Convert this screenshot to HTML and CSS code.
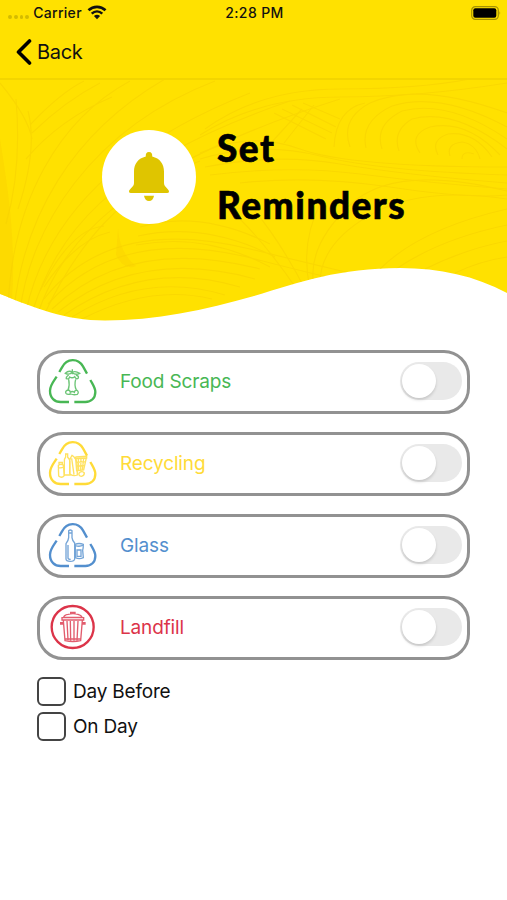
FILE: index.html
```html
<!DOCTYPE html>
<html lang="en">
<head>
    <meta charset="UTF-8">
    <meta name="viewport" content="width=device-width, initial-scale=1.0">
    <title>Set Reminders</title>
    <link rel="stylesheet" href="styles.css">
</head>
<body>
    <!-- Status Bar -->
    <div class="status-bar">
        <div class="carrier">
            <span class="dots"><i></i><i></i><i></i><i></i></span>
            <span>Carrier</span>
            <svg class="wifi" viewBox="0 0 20 15">
                <path d="M1.5 5.3C6.3.7 13.7.7 18.5 5.3" stroke-width="2.7"/>
                <path d="M4.7 8.7C7.8 5.8 12.2 5.8 15.3 8.7" stroke-width="2.5"/>
                <path d="M6.9 11.1Q10 8.3 13.1 11.1L10 14.2Z" fill="#111" stroke="none"/>
            </svg>
        </div>
        <span class="time">2:28 PM</span>
        <svg class="battery" viewBox="0 0 30 14">
            <rect x="0.7" y="0.7" width="26.6" height="12.6" rx="3.6" fill="none" stroke="#a69300" stroke-width="1.2"/>
            <rect x="2.3" y="2.3" width="23" height="9.4" rx="2" fill="#000"/>
            <path d="M28.5 5Q30 7 28.5 9Z" fill="#a69300"/>
        </svg>
    </div>

    <!-- Navigation Bar -->
    <div class="navbar">
        <a href="#">
            <svg class="chevron" viewBox="0 0 16 26"><path d="M13.5 2L2.5 13L13.5 24"/></svg>
            <span>Back</span>
        </a>
    </div>

    <!-- Header -->
    <div class="hero">
        <svg class="hero-bg" viewBox="0 0 507 242">
            <defs>
                <clipPath id="wave">
                    <path d="M0 0H507V214C475 197 440 189 400 189C340 189 300 203 254 217C205 231 155 241.5 105 241.5C65 241.5 35 229 0 215Z"/>
                </clipPath>
            </defs>
            <g clip-path="url(#wave)">
                <rect width="507" height="242" fill="#ffe100"/>
                <path d="M0 60C8 110 16 160 12 220L0 215Z M118 150Q120 175 136 187Q124 192 116 176Z" fill="#fbd300" opacity=".5"/>
                <g class="lines">
                    <!-- fan on the left -->
                    <path d="M0 4Q28 38 32 60M16 20Q22 90 6 145M28 32Q38 70 18 130M8 230C12 120 60 40 130 2M14 230C24 140 70 55 165 0M20 232C30 150 90 50 215 2M26 232C42 160 95 75 250 14M32 234C55 160 105 85 290 22M38 234C62 165 120 90 340 20M44 236C75 170 120 110 200 82M30 46Q60 14 84 2M32 54Q65 22 100 4M26 80Q60 40 112 18"/>
                    <!-- low waves -->
                    <path d="M44 220Q110 136 250 170T420 210M48 225Q120 145 255 180T420 215M52 230Q130 156 260 190M58 233Q140 168 255 200M64 236Q145 180 240 208M72 238Q145 192 225 216M82 240Q150 205 212 220M40 212Q70 150 104 147M44 208Q75 161 110 153M140 148Q200 130 270 165M138 157Q205 142 275 178M136 166Q205 153 270 188"/>
                    <!-- long bands -->
                    <path d="M200 74Q250 52 300 70T507 88M200 80Q260 62 320 77T507 96M205 88Q275 74 340 85T507 104M210 96Q290 86 360 95T507 110M240 104Q310 96 390 108T507 116M200 56Q260 18 340 18T507 4M205 50Q260 10 340 10T470 0"/>
                    <!-- shell on the right -->
                    <path d="M334 68Q336 30 365 24M350 68Q340 40 370 24Q420 2 507 34M366 69Q360 42 392 27Q440 12 507 48M382 70Q374 46 402 32Q448 20 507 60M399 72Q392 52 412 40Q454 29 507 70M420 74Q408 56 430 48Q466 40 500 76M438 76Q430 61 448 55Q474 52 492 78M450 77Q446 65 462 63Q476 65 480 80M462 80Q462 71 474 75"/>
                    <path d="M274 34L326 60M282 30L332 54M292 26L336 48M303 24L340 40M302 30L270 65M314 26L284 64"/>
                    <!-- lower right leaves -->
                    <path d="M300 215Q270 170 240 140M306 212Q282 165 255 132M310 210Q300 165 320 125M314 208Q306 168 350 126T507 112M320 204Q320 165 370 136T507 120M380 190Q420 150 507 130M396 190Q440 160 507 146M425 190Q465 170 507 162M455 194Q480 182 507 178"/>
                </g>
            </g>
        </svg>
        <div class="bell">
            <svg viewBox="0 0 42 50">
                <path d="M21 0C18.500 0 17.500 2 17.800 4.600C10 6.600 6 12 6 19.500V31C6 35 1 37 1 39.500Q1 41 3 41H39Q41 41 41 39.500C41 37 36 35 36 31V19.500C36 12 32 6.600 24.200 4.600C24.500 2 23.500 0 21 0Z"/>
                <path d="M16 43.700H26Q25 49 21 49T16 43.700Z"/>
            </svg>
        </div>
        <h1>Set<br>Reminders</h1>
    </div>

    <!-- Bin arrows shared by the three recycling icons -->
    <svg class="sprite">
        <symbol id="loop" viewBox="0 0 150 138">
            <path d="M34 42L42 28C57 0 90 0 105 25L117 47M26 56C14 74 6 82 6 98C6 120 20 132 38 132H63M79 132H112C130 132 142 120 142 102C142 90 137 84 127 66" fill="none" stroke="currentColor" stroke-width="7"/>
        </symbol>
    </svg>

    <!-- Reminders -->
    <div class="container">
        <div class="card food">
            <svg class="icon" viewBox="0 0 150 138">
                <use href="#loop"/>
                <g class="art">
                    <path d="M73 49V34M73 43Q63 35 52 46Q64 52 73 43Q82 38 95 46Q84 52 73 45"/>
                    <path d="M62 51Q53 57 55 62Q63 65 65 57Q73 62 80 56Q85 66 91 60Q93 54 84 51M62 64Q66 82 60 97M83 64Q78 82 85 96M60 96Q50 99 54 106Q58 111 68 108Q77 112 88 109Q94 103 87 97Q80 96 79 103Q73 98 67 103Q66 96 60 96"/>
                </g>
            </svg>
            <span class="name">Food Scraps</span>
            <span class="switch"></span>
        </div>
        <div class="card recycling">
            <svg class="icon" viewBox="0 0 150 138">
                <use href="#loop"/>
                <g class="art">
                    <path d="M31 76Q38 70 46 75L49 107Q41 116 32 108ZM30 82Q39 86 47 81M33 72V67H43V72"/>
                    <path d="M49 105V67Q48 56 53 51V42H59V52Q67 59 66 69V105ZM65 101V63Q66 55 72 46Q82 51 87 67L88 105Q77 110 67 103M71 55L78 104"/>
                    <path d="M83 56L115 54L107 90L86 92ZM80 56L84 51L116 49V56M91 56L92 91M99 55L98 91M107 55L103 90M86 67L112 65M87 78L110 76M93 99Q103 91 109 99Q109 108 100 109Q91 108 93 99"/>
                </g>
            </svg>
            <span class="name">Recycling</span>
            <span class="switch"></span>
        </div>
        <div class="card glass">
            <svg class="icon" viewBox="0 0 150 138">
                <use href="#loop"/>
                <g class="art">
                    <path d="M62 26Q67 22 72 26V47Q73 56 80 63V111Q79 118 67 118Q54 118 54 111V65Q61 57 62 47ZM61 33H73M60 69V108Q60 112 68 112"/>
                    <path d="M81 67Q93 62 106 67Q106 79 104 85L106 107Q94 113 82 107V67M81 70Q94 76 106 69M87 84H99V103H87Z"/>
                </g>
            </svg>
            <span class="name">Glass</span>
            <span class="switch"></span>
        </div>
        <div class="card landfill">
            <svg class="icon" viewBox="0 0 150 138">
                <circle cx="74" cy="69" r="63" fill="none" stroke="currentColor" stroke-width="7"/>
                <g class="art">
                    <path d="M68 30V25H81V30M47 40Q48 33 60 31Q75 27 90 31Q101 34 102 40ZM42 41H107V48H42ZM46 49L51 110Q75 115 98 110L103 49M46 56H38V60H46M103 56H111V60H103M50 105H99"/>
                    <path d="M57 51L60 108M67 51L68 110M78 51V110M90 51L87 110"/>
                </g>
            </svg>
            <span class="name">Landfill</span>
            <span class="switch"></span>
        </div>

        <div class="options">
            <label><input type="checkbox"><span>Day Before</span></label>
            <label><input type="checkbox"><span>On Day</span></label>
        </div>
    </div>
</body>
</html>
```

FILE: styles.css
```css
/* General Styles */
* {
    margin: 0;
    padding: 0;
    box-sizing: border-box;
}
body {
    font-family: Inter, "Liberation Sans", sans-serif;
    background: white;
    color: #111;
    min-height: 900px;
}

/* Status Bar */
.status-bar {
    display: grid;
    grid-template-columns: 1fr auto 1fr;
    align-items: center;
    height: 26px;
    padding: 0 6px 0 8px;
    background-color: #ffe100;
    font-size: 14px;
    font-weight: 500;
    line-height: 16px;
}
.carrier {
    display: flex;
    align-items: center;
    letter-spacing: 0.3px;
}
.dots {
    display: flex;
    gap: 2px;
    margin: 8px 4px 0 0;
}
.dots i {
    width: 3.8px;
    height: 3.8px;
    border-radius: 50%;
    background-color: #d4bb00;
}
.wifi {
    width: 20px;
    height: 15px;
    margin: 0 0 1px 5px;
    fill: none;
    stroke: #111;
}
.time {
    padding-bottom: 1px;
    letter-spacing: 0.4px;
}
.battery {
    width: 30px;
    height: 14px;
    justify-self: end;
}

/* Navigation Bar */
.navbar {
    height: 54px;
    padding: 13px 16px 0;
    background-color: #ffe100;
    border-bottom: 2px solid #f3d500;
}
.navbar a {
    display: flex;
    align-items: center;
    gap: 5px;
    width: fit-content;
    color: #111;
    text-decoration: none;
    font-size: 20px;
    letter-spacing: -0.3px;
    line-height: 26px;
}
.chevron {
    width: 16px;
    height: 26px;
    fill: none;
    stroke: #000;
    stroke-width: 3.6;
    stroke-linecap: round;
    stroke-linejoin: round;
}

/* Header */
.hero {
    position: relative;
    display: flex;
    align-items: flex-start;
    gap: 21px;
    height: 241px;
    padding: 50px 0 0 102px;
}
.hero-bg {
    position: absolute;
    top: -1px;
    left: 0;
    width: 507px;
    height: 242px;
    z-index: -1;
}
.lines {
    fill: none;
    stroke: #f8d300;
    stroke-width: 1.2;
    opacity: 0.65;
}
.bell {
    display: flex;
    justify-content: center;
    align-items: center;
    width: 94px;
    height: 94px;
    border-radius: 50%;
    background-color: white;
}
.bell svg {
    width: 42px;
    height: 50px;
    fill: #dfc500;
}
h1 {
    margin-top: -11px;
    font-family: Lato, sans-serif;
    font-size: 37px;
    font-weight: 900;
    line-height: 57px;
    letter-spacing: 1.5px;
    color: #000;
    -webkit-text-stroke: 0.6px #000;
}

/* Reminder Cards */
.sprite {
    position: absolute;
    width: 0;
    height: 0;
}
.container {
    display: flex;
    flex-direction: column;
    gap: 18px;
    padding: 29px 37px 0;
}
.card {
    display: flex;
    align-items: center;
    height: 64px;
    padding: 0 5px 2px 8px;
    border: 3px solid #929292;
    border-radius: 26px;
}
.icon {
    width: 50px;
    height: 46px;
}
.art {
    fill: none;
    stroke: currentColor;
    stroke-width: 4;
    opacity: 0.8;
}
.name {
    flex: 1;
    margin-left: 22px;
    font-size: 19px;
    letter-spacing: -0.15px;
}
.food {
    color: #48b754;
}
.recycling {
    color: #ffdb38;
}
.glass {
    color: #538fce;
}
.landfill {
    color: #dc3449;
}
.switch {
    width: 62px;
    height: 38px;
    border-radius: 19px;
    background-color: #e9e9e9;
}
.switch::before {
    content: "";
    display: block;
    width: 34px;
    height: 34px;
    margin: 2px;
    border-radius: 50%;
    background-color: white;
    box-shadow: 0 2px 3px rgba(0, 0, 0, 0.15);
}

/* Day Options */
.options {
    display: flex;
    flex-direction: column;
    gap: 6px;
    margin-top: -1px;
}
.options label {
    display: flex;
    align-items: center;
    gap: 7px;
    font-size: 19px;
    letter-spacing: -0.2px;
}
.options span {
    padding-bottom: 1px;
}
.options input {
    appearance: none;
    width: 29px;
    height: 29px;
    border: 2px solid #444;
    border-radius: 6px;
}
```
